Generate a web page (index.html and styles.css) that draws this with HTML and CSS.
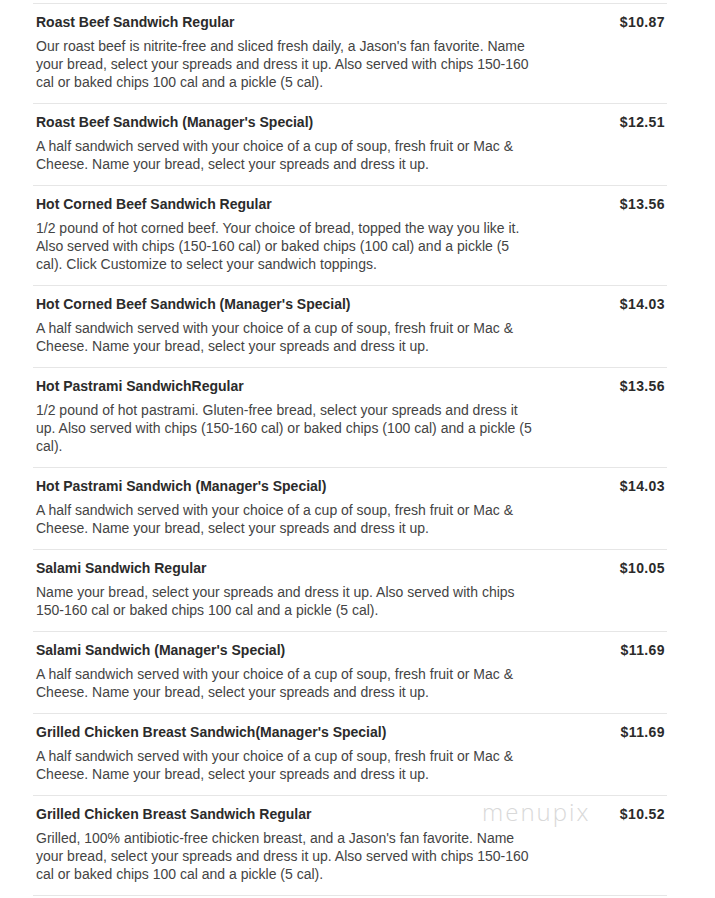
FILE: index.html
```html
<!DOCTYPE html>
<html>
<head>
<meta charset="utf-8">
<link rel="stylesheet" href="styles.css">
</head>
<body>
<div class="menu">
  <div class="item">
    <div class="info">
      <div class="name">Roast Beef Sandwich Regular</div>
      <div class="desc">Our roast beef is nitrite-free and sliced fresh daily, a Jason's fan favorite. Name your bread, select your spreads and dress it up. Also served with chips 150-160 cal or baked chips 100 cal and a pickle (5 cal).</div>
    </div>
    <div class="price">$10.87</div>
  </div>
  <div class="item">
    <div class="info">
      <div class="name">Roast Beef Sandwich (Manager's Special)</div>
      <div class="desc">A half sandwich served with your choice of a cup of soup, fresh fruit or Mac &amp; Cheese. Name your bread, select your spreads and dress it up.</div>
    </div>
    <div class="price">$12.51</div>
  </div>
  <div class="item">
    <div class="info">
      <div class="name">Hot Corned Beef Sandwich Regular</div>
      <div class="desc">1/2 pound of hot corned beef. Your choice of bread, topped the way you like it. Also served with chips (150-160 cal) or baked chips (100 cal) and a pickle (5 cal). Click Customize to select your sandwich toppings.</div>
    </div>
    <div class="price">$13.56</div>
  </div>
  <div class="item">
    <div class="info">
      <div class="name">Hot Corned Beef Sandwich (Manager's Special)</div>
      <div class="desc">A half sandwich served with your choice of a cup of soup, fresh fruit or Mac &amp; Cheese. Name your bread, select your spreads and dress it up.</div>
    </div>
    <div class="price">$14.03</div>
  </div>
  <div class="item">
    <div class="info">
      <div class="name">Hot Pastrami SandwichRegular</div>
      <div class="desc">1/2 pound of hot pastrami. Gluten-free bread, select your spreads and dress it up. Also served with chips (150-160 cal) or baked chips (100 cal) and a pickle (5 cal).</div>
    </div>
    <div class="price">$13.56</div>
  </div>
  <div class="item">
    <div class="info">
      <div class="name">Hot Pastrami Sandwich (Manager's Special)</div>
      <div class="desc">A half sandwich served with your choice of a cup of soup, fresh fruit or Mac &amp; Cheese. Name your bread, select your spreads and dress it up.</div>
    </div>
    <div class="price">$14.03</div>
  </div>
  <div class="item">
    <div class="info">
      <div class="name">Salami Sandwich Regular</div>
      <div class="desc">Name your bread, select your spreads and dress it up. Also served with chips 150-160 cal or baked chips 100 cal and a pickle (5 cal).</div>
    </div>
    <div class="price">$10.05</div>
  </div>
  <div class="item">
    <div class="info">
      <div class="name">Salami Sandwich (Manager's Special)</div>
      <div class="desc">A half sandwich served with your choice of a cup of soup, fresh fruit or Mac &amp; Cheese. Name your bread, select your spreads and dress it up.</div>
    </div>
    <div class="price">$11.69</div>
  </div>
  <div class="item">
    <div class="info">
      <div class="name">Grilled Chicken Breast Sandwich(Manager's Special)</div>
      <div class="desc">A half sandwich served with your choice of a cup of soup, fresh fruit or Mac &amp; Cheese. Name your bread, select your spreads and dress it up.</div>
    </div>
    <div class="price">$11.69</div>
  </div>
  <div class="item last">
    <div class="info">
      <div class="name">Grilled Chicken Breast Sandwich Regular</div>
      <div class="desc">Grilled, 100% antibiotic-free chicken breast, and a Jason's fan favorite. Name your bread, select your spreads and dress it up. Also served with chips 150-160 cal or baked chips 100 cal and a pickle (5 cal).</div>
    </div>
    <div class="price">$10.52</div>
    <div class="watermark">menupix</div>
  </div>
</div>
</body>
</html>
```
FILE: styles.css
```css
html, body {
  margin: 0;
  padding: 0;
  background: #fff;
}
body {
  font-family: "Liberation Sans", Arial, sans-serif;
  color: #333;
}
.menu {
  margin: 3px 0 0 33px;
  width: 634px;
}
.item {
  position: relative;
  display: flex;
  justify-content: space-between;
  align-items: flex-start;
  border-top: 1px solid #e6e6e6;
  padding: 9px 2px 12px 3px;
}
.item.last {
  border-bottom: 1px solid #e6e6e6;
}
.info {
  width: 500px;
}
.name {
  font-size: 14px;
  font-weight: bold;
  line-height: 18px;
  color: #2b2b2b;
}
.desc {
  margin-top: 6px;
  font-size: 14px;
  line-height: 18px;
  color: #444;
}
.price {
  font-size: 14px;
  font-weight: bold;
  line-height: 18px;
  letter-spacing: 0.4px;
  color: #2b2b2b;
}
.watermark {
  position: absolute;
  left: 449px;
  top: 4px;
  font-family: "Open Sans", sans-serif;
  font-weight: 300;
  font-size: 24px;
  line-height: 24px;
  letter-spacing: 2px;
  color: #d9d9d9;
}
```
